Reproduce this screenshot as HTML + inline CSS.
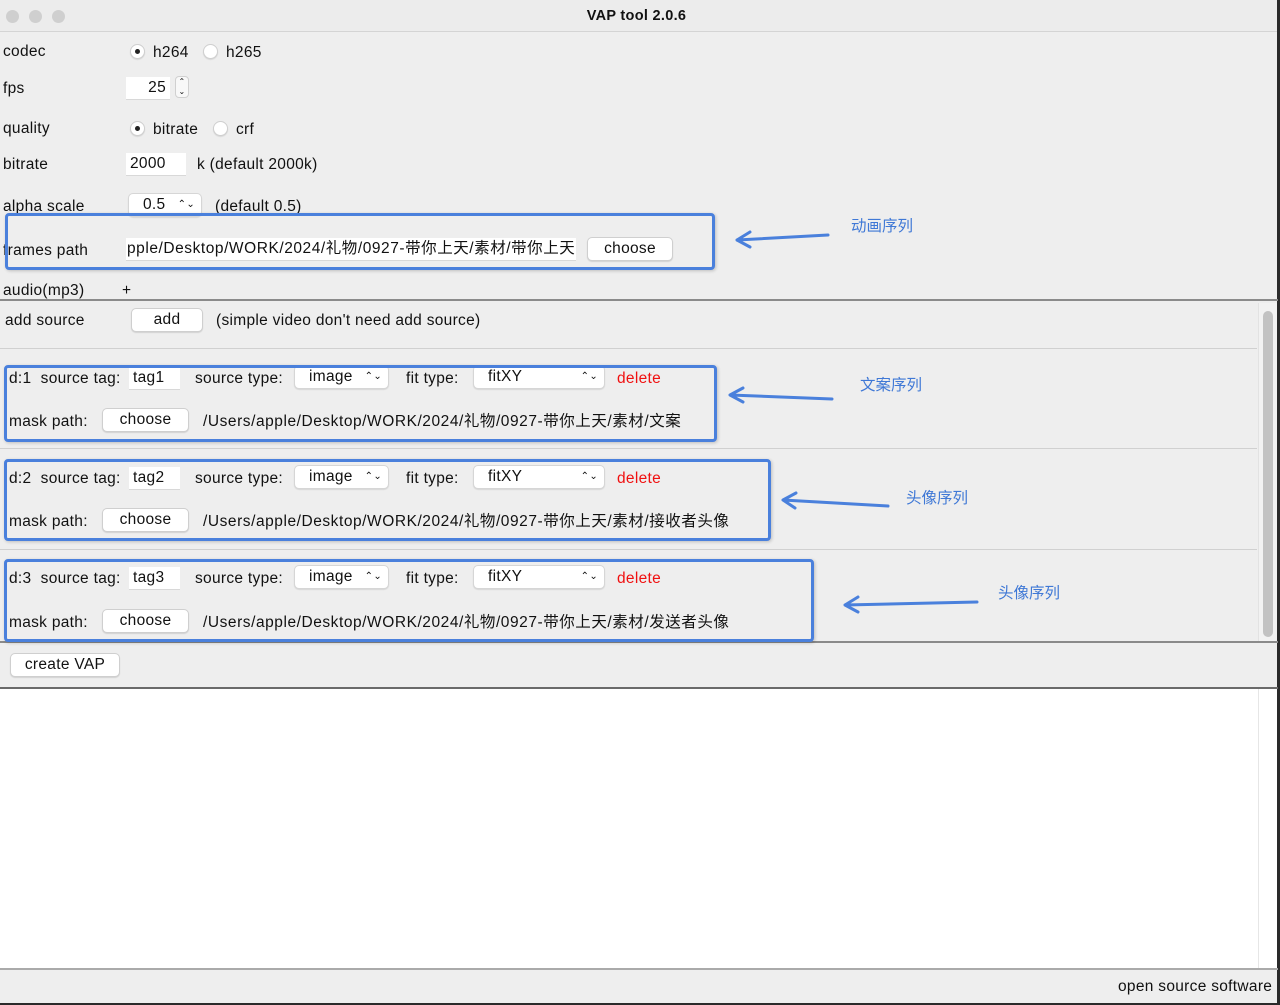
<!DOCTYPE html>
<html><head><meta charset="utf-8"><style>
*{margin:0;padding:0;box-sizing:border-box}
body{width:1280px;height:1005px;background:#eeeeee;position:relative;overflow:hidden;font-family:"Liberation Sans","Noto Sans CJK SC",sans-serif;font-size:15.5px;letter-spacing:0.3px;color:#111}
.a{position:absolute;white-space:nowrap}
.t{position:absolute;white-space:nowrap;line-height:18px;transform:translateY(1px)}
.btn{position:absolute;background:#fff;border:1px solid #cfcfcf;border-radius:5px;box-shadow:0 1px 1px rgba(0,0,0,.12);text-align:center;line-height:22px}
.fld{position:absolute;background:#fff;border-bottom:1px solid #d8d8d8;line-height:22px;padding-left:4px;overflow:hidden;white-space:nowrap}
.sel{position:absolute;background:#fff;border:1px solid #d6d6d6;border-radius:5px;box-shadow:0 1px 1px rgba(0,0,0,.1);line-height:22px}
.sel .ar{position:absolute;right:6px;top:0;font-size:10px;line-height:22px}
.box{position:absolute;border:3px solid #4a80dc;border-radius:4px;box-shadow:1px 1px 3px rgba(0,0,0,.2)}
.rad{position:absolute;width:15px;height:15px;border-radius:50%;background:#fff;border:1px solid #cfcfcf;box-shadow:0 1px 1px rgba(0,0,0,.1)}
.rad.on::after{content:"";position:absolute;left:4px;top:4px;width:5px;height:5px;border-radius:50%;background:#222}
.blue{color:#3f78d6;font-size:15.5px;letter-spacing:0}
.red{color:#f01010}
.hl{position:absolute;height:1px;background:#d0d0d0}
.cj{letter-spacing:0.55px}
</style></head><body>
<div class="a" style="left:0;top:0;width:1280px;height:32px;background:#ececec;border-bottom:1px solid #d4d4d4"></div>
<div class="a" style="left:6px;top:10px;width:13px;height:13px;border-radius:50%;background:#cfcfcf"></div>
<div class="a" style="left:29px;top:10px;width:13px;height:13px;border-radius:50%;background:#cfcfcf"></div>
<div class="a" style="left:52px;top:10px;width:13px;height:13px;border-radius:50%;background:#cfcfcf"></div>
<div class="t" style="left:0;width:1273px;text-align:center;top:6px;font-weight:bold;font-size:14.5px">VAP tool 2.0.6</div>
<div class="a" style="left:1277px;top:0;width:3px;height:1005px;background:#2a2a2a"></div>

<div class="t" style="left:3px;top:42px">codec</div>
<div class="rad on" style="left:130px;top:44px"></div><div class="t" style="left:153px;top:43px">h264</div>
<div class="rad" style="left:203px;top:44px"></div><div class="t" style="left:226px;top:43px">h265</div>
<div class="t" style="left:3px;top:79px">fps</div>
<div class="fld" style="left:126px;top:77px;width:44px;text-align:right;padding-right:4px">25</div>
<div class="a" style="left:175px;top:76px;width:14px;height:22px;border:1px solid #d0d0d0;border-radius:4px;background:#f8f8f8;font-size:8px;line-height:10px;text-align:center">⌃<br>⌄</div>
<div class="t" style="left:3px;top:119px">quality</div>
<div class="rad on" style="left:130px;top:121px"></div><div class="t" style="left:153px;top:120px">bitrate</div>
<div class="rad" style="left:213px;top:121px"></div><div class="t" style="left:236px;top:120px">crf</div>
<div class="t" style="left:3px;top:155px">bitrate</div>
<div class="fld" style="left:126px;top:153px;width:60px">2000</div>
<div class="t" style="left:197px;top:155px">k (default 2000k)</div>
<div class="t" style="left:3px;top:197px">alpha scale</div>
<div class="sel" style="left:128px;top:193px;width:74px;padding-left:14px">0.5<span class="ar">⌃⌄</span></div>
<div class="t" style="left:215px;top:197px">(default 0.5)</div>
<div class="t" style="left:3px;top:241px">frames path</div>
<div class="fld cj" style="left:126px;top:238px;width:450px;padding-left:1px">pple/Desktop/WORK/2024/礼物/0927-带你上天/素材/带你上天</div>
<div class="btn" style="left:587px;top:237px;width:86px">choose</div>
<div class="t" style="left:3px;top:281px">audio(mp3)</div>
<div class="t" style="left:122px;top:281px">+</div>

<div class="a" style="left:0;top:299px;width:1278px;height:2px;background:#8a8a8a"></div>

<div class="a" style="left:1258px;top:303px;width:19px;height:338px;background:#f2f2f2;border-left:1px solid #e2e2e2"></div>
<div class="a" style="left:1263px;top:311px;width:10px;height:326px;border-radius:5px;background:#c2c2c2"></div>
<div class="t" style="left:5px;top:311px">add source</div>
<div class="btn" style="left:131px;top:308px;width:72px">add</div>
<div class="t" style="left:216px;top:311px">(simple video don't need add source)</div>
<div class="hl" style="left:0;top:348px;width:1257px"></div>
<div class="hl" style="left:0;top:448px;width:1257px"></div>
<div class="hl" style="left:0;top:549px;width:1257px"></div>

<div class="t" style="left:9px;top:369px">d:1&nbsp; source tag:</div>
<div class="fld" style="left:129px;top:367px;width:51px;padding-left:4px">tag1</div>
<div class="t" style="left:195px;top:369px">source type:</div>
<div class="sel" style="left:294px;top:365px;width:95px;padding-left:14px">image<span class="ar">⌃⌄</span></div>
<div class="t" style="left:406px;top:369px">fit type:</div>
<div class="sel" style="left:473px;top:365px;width:132px;padding-left:14px">fitXY<span class="ar">⌃⌄</span></div>
<div class="t red" style="left:617px;top:369px">delete</div>
<div class="t" style="left:9px;top:412px">mask path:</div>
<div class="btn" style="left:102px;top:408px;width:87px">choose</div>
<div class="t cj" style="left:203px;top:412px">/Users/apple/Desktop/WORK/2024/礼物/0927-带你上天/素材/文案</div>

<div class="t" style="left:9px;top:469px">d:2&nbsp; source tag:</div>
<div class="fld" style="left:129px;top:467px;width:51px;padding-left:4px">tag2</div>
<div class="t" style="left:195px;top:469px">source type:</div>
<div class="sel" style="left:294px;top:465px;width:95px;padding-left:14px">image<span class="ar">⌃⌄</span></div>
<div class="t" style="left:406px;top:469px">fit type:</div>
<div class="sel" style="left:473px;top:465px;width:132px;padding-left:14px">fitXY<span class="ar">⌃⌄</span></div>
<div class="t red" style="left:617px;top:469px">delete</div>
<div class="t" style="left:9px;top:512px">mask path:</div>
<div class="btn" style="left:102px;top:508px;width:87px">choose</div>
<div class="t cj" style="left:203px;top:512px">/Users/apple/Desktop/WORK/2024/礼物/0927-带你上天/素材/接收者头像</div>

<div class="t" style="left:9px;top:569px">d:3&nbsp; source tag:</div>
<div class="fld" style="left:129px;top:567px;width:51px;padding-left:4px">tag3</div>
<div class="t" style="left:195px;top:569px">source type:</div>
<div class="sel" style="left:294px;top:565px;width:95px;padding-left:14px">image<span class="ar">⌃⌄</span></div>
<div class="t" style="left:406px;top:569px">fit type:</div>
<div class="sel" style="left:473px;top:565px;width:132px;padding-left:14px">fitXY<span class="ar">⌃⌄</span></div>
<div class="t red" style="left:617px;top:569px">delete</div>
<div class="t" style="left:9px;top:613px">mask path:</div>
<div class="btn" style="left:102px;top:609px;width:87px">choose</div>
<div class="t cj" style="left:203px;top:613px">/Users/apple/Desktop/WORK/2024/礼物/0927-带你上天/素材/发送者头像</div>

<div class="a" style="left:0;top:641px;width:1278px;height:2px;background:#8a8a8a"></div>
<div class="btn" style="left:10px;top:653px;width:110px">create VAP</div>
<div class="a" style="left:0;top:687px;width:1278px;height:2px;background:#6a6a6a"></div>
<div class="a" style="left:0;top:689px;width:1277px;height:279px;background:#fff"></div>
<div class="a" style="left:1258px;top:689px;width:1px;height:279px;background:#e6e6e6"></div>
<div class="a" style="left:0;top:968px;width:1278px;height:2px;background:#aaaaaa"></div>
<div class="t" style="left:1118px;top:977px">open source software</div>
<div class="a" style="left:0;top:1003px;width:1280px;height:2px;background:#2a2a2a"></div>

<div class="box" style="left:5px;top:213px;width:710px;height:57px"></div>
<div class="box" style="left:4px;top:365px;width:713px;height:77px"></div>
<div class="box" style="left:4px;top:459px;width:767px;height:82px"></div>
<div class="box" style="left:4px;top:559px;width:810px;height:83px"></div>
<svg class="a" style="left:0;top:0" width="1280" height="1005">
<g stroke="#4a80dc" stroke-width="3" fill="none" stroke-linecap="round" stroke-linejoin="round">
<path d="M828 235 L737 240 M750 232 L737 240 L750 247"/>
<path d="M832 399 L730 395 M743 388 L730 395 L743 402"/>
<path d="M888 506 L783 500 M796 493 L783 500 L795 508"/>
<path d="M977 602 L845 605 M858 597 L845 605 L858 612"/>
</g></svg>
<div class="t blue" style="left:851px;top:217px">动画序列</div>
<div class="t blue" style="left:860px;top:376px">文案序列</div>
<div class="t blue" style="left:906px;top:489px">头像序列</div>
<div class="t blue" style="left:998px;top:584px">头像序列</div>
</body></html>
